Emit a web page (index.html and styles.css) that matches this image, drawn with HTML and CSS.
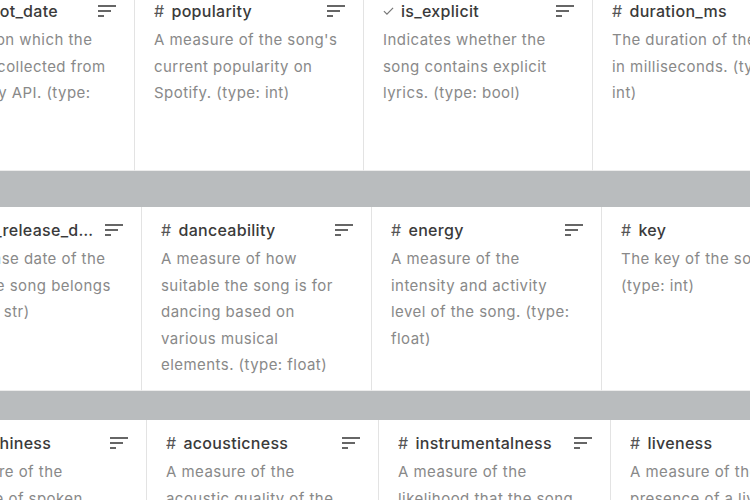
FILE: index.html
```html
<!DOCTYPE html>
<html>
<head>
<meta charset="utf-8">
<link rel="stylesheet" href="styles.css">
</head>
<body>
<div class="page">
  <div class="row r1">
    <div class="card">
      <div class="head"><span class="title"><span class="hash">#</span> snapshot_date</span><svg class="sort" viewBox="0 0 18 12"><path d="M0 1H18M0 6H13M0 11H6"/></svg></div>
      <p class="desc">The date on which the data was collected from the Spotify API. (type: str)</p>
    </div>
    <div class="card">
      <div class="head"><span class="title"><span class="hash">#</span> popularity</span><svg class="sort" viewBox="0 0 18 12"><path d="M0 1H18M0 6H13M0 11H6"/></svg></div>
      <p class="desc">A measure of the song's current popularity on Spotify. (type: int)</p>
    </div>
    <div class="card">
      <div class="head"><span class="title"><svg class="check" viewBox="0 0 12 10"><path d="M1 5.2L4.3 8.5L11 1.5"/></svg> is_explicit</span><svg class="sort" viewBox="0 0 18 12"><path d="M0 1H18M0 6H13M0 11H6"/></svg></div>
      <p class="desc">Indicates whether the song contains explicit lyrics. (type: bool)</p>
    </div>
    <div class="card">
      <div class="head"><span class="title"><span class="hash">#</span> duration_ms</span><svg class="sort" viewBox="0 0 18 12"><path d="M0 1H18M0 6H13M0 11H6"/></svg></div>
      <p class="desc">The duration of the song in milliseconds. (type: int)</p>
    </div>
  </div>
  <div class="row r2">
    <div class="card">
      <div class="head"><span class="title"><span class="hash">#</span> album_release_date</span><svg class="sort" viewBox="0 0 18 12"><path d="M0 1H18M0 6H13M0 11H6"/></svg></div>
      <p class="desc">The release date of the album the song belongs to. (type: str)</p>
    </div>
    <div class="card">
      <div class="head"><span class="title"><span class="hash">#</span> danceability</span><svg class="sort" viewBox="0 0 18 12"><path d="M0 1H18M0 6H13M0 11H6"/></svg></div>
      <p class="desc">A measure of how suitable the song is for dancing based on various musical elements. (type: float)</p>
    </div>
    <div class="card">
      <div class="head"><span class="title"><span class="hash">#</span> energy</span><svg class="sort" viewBox="0 0 18 12"><path d="M0 1H18M0 6H13M0 11H6"/></svg></div>
      <p class="desc">A measure of the intensity and activity level of the song. (type: float)</p>
    </div>
    <div class="card">
      <div class="head"><span class="title"><span class="hash">#</span> key</span><svg class="sort" viewBox="0 0 18 12"><path d="M0 1H18M0 6H13M0 11H6"/></svg></div>
      <p class="desc">The key of the song. (type: int)</p>
    </div>
  </div>
  <div class="row r3">
    <div class="card">
      <div class="head"><span class="title"><span class="hash">#</span> speechiness</span><svg class="sort" viewBox="0 0 18 12"><path d="M0 1H18M0 6H13M0 11H6"/></svg></div>
      <p class="desc">A measure of the presence of spoken words in the song. (type: float)</p>
    </div>
    <div class="card">
      <div class="head"><span class="title"><span class="hash">#</span> acousticness</span><svg class="sort" viewBox="0 0 18 12"><path d="M0 1H18M0 6H13M0 11H6"/></svg></div>
      <p class="desc">A measure of the acoustic quality of the song. (type: float)</p>
    </div>
    <div class="card">
      <div class="head"><span class="title"><span class="hash">#</span> instrumentalness</span><svg class="sort" viewBox="0 0 18 12"><path d="M0 1H18M0 6H13M0 11H6"/></svg></div>
      <p class="desc">A measure of the likelihood that the song contains no vocals. (type: float)</p>
    </div>
    <div class="card">
      <div class="head"><span class="title"><span class="hash">#</span> liveness</span><svg class="sort" viewBox="0 0 18 12"><path d="M0 1H18M0 6H13M0 11H6"/></svg></div>
      <p class="desc">A measure of the presence of a live audience in the recording. (type: float)</p>
    </div>
  </div>
</div>
</body>
</html>
```

FILE: styles.css
```css
* { box-sizing: border-box; }
html, body {
  margin: 0;
  padding: 0;
  width: 750px;
  height: 500px;
  overflow: hidden;
  background: #b9bcbe;
}
.page {
  width: 750px;
  height: 500px;
  overflow: hidden;
  font-family: Inter, "Noto Sans", sans-serif;
}
.row {
  display: flex;
  flex-wrap: nowrap;
  background: #fff;
  width: max-content;
}
.r1 { margin-top: -12px; margin-left: -94px; height: 183px; }
.r2 { margin-top: 36px; margin-left: -88px; height: 184px; }
.r3 { margin-top: 29px; margin-left: -85px; height: 120px; }
.card {
  flex: none;
  width: 229px;
  border-right: 1px solid #e3e3e3;
  border-bottom: 1px solid #ececec;
  background: #fff;
  padding: 13px 18px 12px 19px;
}
.r2 .card { width: 230px; }
.r3 .card { width: 232px; }
.head {
  display: flex;
  align-items: center;
  justify-content: space-between;
  gap: 10px;
  height: 20px;
}
.title {
  font-size: 16px;
  font-weight: 500;
  letter-spacing: 0.3px;
  color: #3a3a3a;
  white-space: nowrap;
  overflow: hidden;
  text-overflow: ellipsis;
  min-width: 0;
  display: flex;
  align-items: center;
  gap: 7px;
}
.r2 .card:first-child .title { display: block; }
.hash {
  font-weight: 400;
  color: #555;
}
.check {
  width: 11px;
  height: 10px;
  fill: none;
  stroke: #777;
  stroke-width: 1.3;
  flex: none;
}
.sort {
  flex: none;
  width: 18px;
  height: 12px;
  fill: none;
  stroke: #666;
  stroke-width: 2;
}
.desc {
  margin: 6px 0 0 0;
  font-size: 15px;
  line-height: 26.5px;
  letter-spacing: 0.45px;
  color: #898989;
}
```
